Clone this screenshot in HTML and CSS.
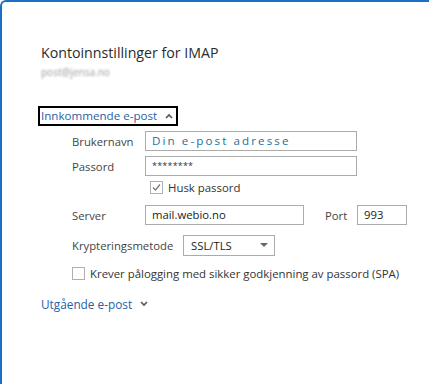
FILE: index.html
```html
<!DOCTYPE html>
<html>
<head>
<meta charset="utf-8">
<link rel="stylesheet" href="styles.css">
</head>
<body>
<div class="frame">
  <div class="title">Kontoinnstillinger for IMAP</div>
  <div class="email">post@jensa.no</div>

  <div class="section-head focused">
    <span>Innkommende e-post</span>
    <svg class="chev" width="8" height="6" viewBox="0 0 8 6"><path d="M1 5 L4 2 L7 5" fill="none" stroke="#555" stroke-width="1.6"/></svg>
  </div>

  <div class="form">
    <div class="row">
      <label class="lbl">Brukernavn</label>
      <div class="input wide placeholder">Din e-post adresse</div>
    </div>
    <div class="row">
      <label class="lbl">Passord</label>
      <div class="input wide pw">********</div>
    </div>
    <div class="row check-row remember">
      <span class="box">
        <svg width="13" height="13" viewBox="0 0 13 13"><path d="M3 6.5 L5.5 9 L10 3.5" fill="none" stroke="#777" stroke-width="1.2"/></svg>
      </span>
      <span class="check-text">Husk passord</span>
    </div>
    <div class="row">
      <label class="lbl">Server</label>
      <div class="input server">mail.webio.no</div>
      <label class="port-lbl">Port</label>
      <div class="input port">993</div>
    </div>
    <div class="row select-row">
      <label class="lbl-long">Krypteringsmetode</label>
      <div class="select">
        <span>SSL/TLS</span>
        <svg width="8" height="5" viewBox="0 0 8 5"><path d="M0 0 L8 0 L4 4 Z" fill="#666"/></svg>
      </div>
    </div>
    <div class="row check-row spa">
      <span class="box"></span>
      <span class="check-text">Krever pålogging med sikker godkjenning av passord (SPA)</span>
    </div>
  </div>

  <div class="section-head outgoing">
    <span>Utgående e-post</span>
    <svg class="chev" width="8" height="6" viewBox="0 0 8 6"><path d="M1 1 L4 4 L7 1" fill="none" stroke="#555" stroke-width="1.6"/></svg>
  </div>
</div>
</body>
</html>
```

FILE: styles.css
```css
html, body {
  margin: 0;
  padding: 0;
  background: #ffffff;
}

body {
  font-family: "Open Sans", "Noto Sans", "Liberation Sans", sans-serif;
  color: #333333;
}

.frame {
  box-sizing: border-box;
  height: 384px;
  border-left: 2px solid #1c6fc6;
  border-top: 2px solid #1c6fc6;
  border-top-left-radius: 6px;
  padding: 41px 0 0 39px;
}

.title {
  font-size: 14.2px;
  line-height: 20px;
  color: #2b2b2b;
}

.email {
  font-size: 10px;
  line-height: 14px;
  margin-top: 2px;
  color: #9a9a9a;
  filter: blur(1.2px);
}

.section-head {
  display: inline-flex;
  align-items: center;
  gap: 8px;
  font-size: 11.6px;
  line-height: 16px;
  color: #2a5ea8;
  border: 2px solid transparent;
  padding: 0 3px 0 1px;
  margin-left: -3px;
}

.section-head.focused {
  margin-top: 27px;
  border-color: #000000;
}

.section-head.outgoing {
  margin-top: 14px;
  font-size: 11.8px;
}

.chev {
  display: block;
}

.form {
  margin: 5px 0 0 31px;
  display: flex;
  flex-direction: column;
}

.row {
  display: flex;
  align-items: center;
  font-size: 11.3px;
  color: #444444;
  height: 20px;
  margin-bottom: 5px;
}

.lbl {
  width: 73px;
}

.lbl-long {
  width: 111px;
}

.input {
  box-sizing: border-box;
  height: 20px;
  border: 1px solid #ababab;
  padding: 0 6px;
  line-height: 18px;
  font-size: 11.3px;
  color: #222222;
}

.wide {
  width: 212px;
}

.placeholder {
  color: #1c6f9e;
  letter-spacing: 2.1px;
  font-size: 11.6px;
}

.pw {
  font-size: 9px;
  letter-spacing: 0.2px;
  color: #333;
}

.check-row {
  height: 13px;
}

.remember {
  margin-top: 0;
  margin-left: 78px;
  margin-bottom: 11px;
}

.spa {
  margin-top: 1px;
  margin-bottom: 0;
}

.select-row {
  margin-top: 5px;
  margin-bottom: 11px;
}

.box {
  box-sizing: border-box;
  width: 13px;
  height: 13px;
  border: 1px solid #b0b0b0;
  display: flex;
  align-items: center;
  justify-content: center;
  margin-right: 5px;
}

.box svg {
  display: block;
  flex: none;
}

.check-text {
  font-size: 11.4px;
  color: #333333;
}

.server {
  width: 159px;
}

.port-lbl {
  margin-left: 21px;
  width: 32px;
}

.port {
  width: 50px;
}

.select {
  box-sizing: border-box;
  width: 92px;
  height: 21px;
  border: 1px solid #ababab;
  display: flex;
  align-items: center;
  justify-content: space-between;
  padding: 0 6px 0 7px;
  font-size: 11.3px;
  color: #222222;
}

.select svg {
  display: block;
}
```
